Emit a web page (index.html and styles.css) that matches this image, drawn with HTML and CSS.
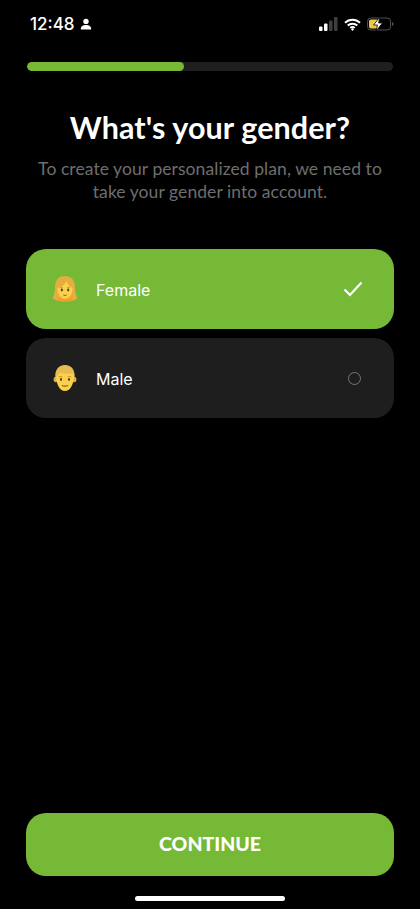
FILE: index.html
```html
<!DOCTYPE html>
<html>
<head>
<meta charset="UTF-8">
    <title>Gender</title>
    <link rel="stylesheet" href="styles.css">
</head>
<body>
    <div class="screen">
        <div class="statusBar">
            <div class="statusLeft">
                <span class="time">12:48</span>
                <svg width="12" height="12" viewBox="0 0 12 12"><circle cx="6" cy="3.4" r="2.7" fill="#fff"/><path d="M.8 11c0-2.800 2.300-4 5.200-4s5.200 1.200 5.200 4c0 .4-.2.6-.6.6H1.400c-.4 0-.6-.2-.6-.6z" fill="#fff"/></svg>
            </div>
            <div class="statusRight">
                <svg width="19" height="14" viewBox="0 0 19 14">
                    <rect x="0" y="9.500" width="3.500" height="4.500" rx="1" fill="#fff"/>
                    <rect x="5" y="6.500" width="3.500" height="7.500" rx="1" fill="#fff"/>
                    <rect x="10" y="3.500" width="3.500" height="10.500" rx="1" fill="#3f3f3f"/>
                    <rect x="15" y="0" width="3.500" height="14" rx="1" fill="#3f3f3f"/>
                </svg>
                <svg width="17" height="13" viewBox="0 0 17 13" fill="none" stroke="#fff" stroke-width="2">
                    <path d="M1 4.700C5.200.6 11.800.6 16 4.700"/>
                    <path d="M3.700 7.500c2.700-2.500 6.900-2.500 9.600 0"/>
                    <path d="M6.300 10c1.300-1.100 3.100-1.100 4.400 0"/>
                    <circle cx="8.500" cy="11.500" r=".8" fill="#fff" stroke-width="1"/>
                </svg>
                <svg class="battery" width="27" height="14" viewBox="0 0 27 14">
                    <rect x=".5" y="1" width="23" height="12" rx="3.500" fill="none" stroke="#505050"/>
                    <rect x="2" y="2.500" width="10" height="9" rx="2" fill="#ecca4a"/>
                    <path d="M25 5c1 .3 1.500 1 1.500 2s-.5 1.700-1.500 2z" fill="#505050"/>
                    <path d="M13 0 6.500 8h4L9 14l6.500-8h-4z" fill="#fff" stroke="#000" stroke-width=".8"/>
                </svg>
            </div>
        </div>

        <div class="progress"><div class="progressFill" style="width: 43%"></div></div>

        <h1 class="title">What's your gender?</h1>
        <p class="subtitle">To create your personalized plan, we need to take your gender into account.</p>

        <div class="options">
            <div class="option selected">
                <svg class="emoji" width="28" height="28" viewBox="0 0 28 28">
                    <path d="M14 1C7.500 1 4 5.500 4 12c0 5-1 8.500-2.500 11 1.500 1.800 6 3.500 12.500 3.500s11-1.700 12.500-3.500C25 20.500 24 17 24 12c0-6.500-3.500-11-10-11z" fill="#e5ad3f"/>
                    <path d="M5.500 25c2-2.200 5-3 8.500-3s6.500.8 8.500 3c-2.300 1-5 1.500-8.500 1.500S7.800 26 5.500 25z" fill="#ef9f2f"/>
                    <path d="M6.500 13C11 12 14.500 9 15.500 6c1 2.800 3.200 6 6 7 .4 6-3.500 10.800-7.500 10.800S6.100 19 6.500 13z" fill="#fbd04b"/>
                    <path d="M9 12.900c.9-.6 2-.7 2.900-.3M16 12.600c.9-.4 2-.3 2.900.3" fill="none" stroke="#b9832a" stroke-width=".8"/>
                    <ellipse cx="10.800" cy="15" rx="1" ry="1.400" fill="#4d3418"/>
                    <ellipse cx="17.200" cy="15" rx="1" ry="1.400" fill="#4d3418"/>
                    <path d="M11.800 19.600c1.400.5 3 .5 4.400 0-.5 1-1.200 1.400-2.200 1.400s-1.700-.4-2.200-1.400z" fill="#a8492a"/>
                </svg>
                <span class="label">Female</span>
                <svg class="mark" width="20" height="16" viewBox="0 0 20 16"><path d="M1.500 8.500 7 14 18.500 1.500" fill="none" stroke="#fff" stroke-width="2.200"/></svg>
            </div>
            <div class="option">
                <svg class="emoji" width="28" height="28" viewBox="0 0 28 28">
                    <ellipse cx="4.600" cy="15.500" rx="2" ry="2.800" fill="#e9ac38"/>
                    <ellipse cx="23.400" cy="15.500" rx="2" ry="2.800" fill="#e9ac38"/>
                    <path d="M4.800 10c0 9.500 3.700 17 9.200 17s9.200-7.500 9.200-17-18.400-9.500-18.400 0z" fill="#fbd04b"/>
                    <path d="M4.500 14.500C3.500 6 7.500 1 14 1c6.500 0 10.500 5 9.500 13.500-.4-2.200-.9-4-1.700-5.300-4.300 1-10.300.9-13.300-.7-1.200 1.300-3 3.800-4 6.500z" fill="#e6bb52"/>
                    <path d="M7.800 13c1-.6 2.400-.7 3.500-.3M16.700 12.700c1.100-.4 2.500-.3 3.500.3" fill="none" stroke="#b9832a" stroke-width=".9"/>
                    <ellipse cx="10" cy="15.500" rx="1" ry="1.400" fill="#4d3418"/>
                    <ellipse cx="18" cy="15.500" rx="1" ry="1.400" fill="#4d3418"/>
                    <path d="M10.800 21.500c2 .8 4.400.8 6.400 0" fill="none" stroke="#8a5a1e" stroke-width="1.100"/>
                </svg>
                <span class="label">Male</span>
                <span class="radio"></span>
            </div>
        </div>

        <div class="bottom">
            <div class="continueBtn">CONTINUE</div>
            <div class="homeBar"></div>
        </div>
    </div>
</body>
</html>
```

FILE: styles.css
```css
body, div, h1, p {padding: 0; margin: 0;}

body {
    background: #000;
    font-family: Lato, "Open Sans", sans-serif;
    color: #fff;
}

.screen {
    width: 420px;
    height: 909px;
    display: flex;
    flex-direction: column;
    overflow: hidden;
}

.statusBar {
    height: 24px;
    margin-top: 12px;
    padding: 0 26px 0 30px;
    display: flex;
    align-items: center;
    justify-content: space-between;
}

.statusLeft {
    display: flex;
    align-items: center;
    gap: 5px;
}

.statusRight {
    display: flex;
    align-items: center;
    gap: 6px;
}

.time {
    font: 500 17px Inter, sans-serif;
}

.progress {
    height: 9px;
    margin: 26px 27px 0;
    border-radius: 5px;
    background: #1f1f1f;
    overflow: hidden;
}

.progressFill {
    height: 100%;
    border-radius: 5px;
    background: #76b936;
}

.title {
    margin-top: 36px;
    font-size: 30.500px;
    font-weight: 700;
    line-height: 40px;
    letter-spacing: .1px;
    text-align: center;
}

.subtitle {
    margin: 10px 30px 0;
    font-size: 17.500px;
    line-height: 23px;
    font-weight: 400;
    letter-spacing: .07px;
    text-align: center;
    color: #6e6e6e;
}

.options {
    margin: 46px 26px 0;
    display: flex;
    flex-direction: column;
    gap: 9px;
}

.option {
    height: 80px;
    padding: 0 31px 0 25px;
    border-radius: 20px;
    background: #1e1e1e;
    display: flex;
    align-items: center;
}

.option.selected {
    background: #76b936;
}

.emoji {
    flex-shrink: 0;
}

.label {
    margin: 1px 0 0 17px;
    flex: 1;
    font: 400 16px Inter, sans-serif;
}

.radio {
    width: 11px;
    height: 11px;
    margin-right: 2px;
    border: 1.500px solid #777;
    border-radius: 50%;
}

.bottom {
    margin-top: auto;
    padding: 0 26px 8px;
    display: flex;
    flex-direction: column;
    align-items: center;
}

.continueBtn {
    width: 100%;
    height: 63px;
    border-radius: 20px;
    background: #76b936;
    font-size: 19.500px;
    font-weight: 900;
    line-height: 62px;
    text-align: center;
}

.homeBar {
    width: 150px;
    height: 5px;
    margin-top: 20px;
    border-radius: 3px;
    background: #fff;
}
```
